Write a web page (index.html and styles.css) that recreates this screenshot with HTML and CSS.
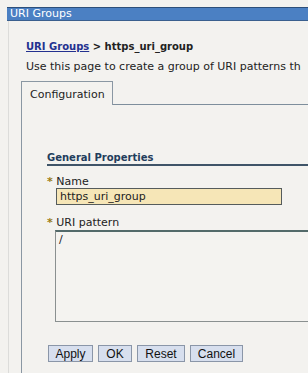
FILE: index.html
```html
<!DOCTYPE html>
<html>
<head>
<meta charset="utf-8">
<link rel="stylesheet" href="styles.css">
</head>
<body>
<div class="page">
  <div class="titlebar">URI Groups</div>
  <div class="content">
    <div class="crumb"><a class="crumb-link" href="#">URI Groups</a> &gt; https_uri_group</div>
    <div class="desc">Use this page to create a group of URI patterns th</div>
    <div class="tabs">
      <div class="tab">Configuration</div>
      <div class="tab-fill"></div>
    </div>
    <div class="panel">
      <div class="section-title">General Properties</div>
      <div class="field">
        <div class="label"><span class="req">*</span> Name</div>
        <div class="input">https_uri_group</div>
      </div>
      <div class="field">
        <div class="label"><span class="req">*</span> URI pattern</div>
        <div class="textarea">/</div>
      </div>
      <div class="buttons">
        <button class="btn btn-apply">Apply</button>
        <button class="btn btn-ok">OK</button>
        <button class="btn btn-reset">Reset</button>
        <button class="btn btn-cancel">Cancel</button>
      </div>
    </div>
  </div>
</div>
</body>
</html>
```
FILE: styles.css
```css
html, body {
  margin: 0;
  padding: 0;
  background: #f3f2ef;
  overflow: hidden;
}
.page {
  width: 308px;
  height: 373px;
  padding-top: 7px;
  box-sizing: border-box;
  font-family: "DejaVu Sans", Verdana, sans-serif;
  font-size: 11px;
  color: #222;
  overflow: hidden;
}
.titlebar {
  margin-left: 7px;
  height: 12px;
  line-height: 12px;
  background: #4b80c3;
  border-top: 1px solid #2d4f7a;
  border-bottom: 1px solid #3a5f8e;
  color: #fff;
  padding-left: 3px;
  font-size: 11px;
  white-space: nowrap;
}
.content {
  margin-left: 8px;
  border-left: 1px solid #dcdcda;
  padding-left: 12px;
  padding-top: 19px;
  white-space: nowrap;
}
.crumb {
  padding-left: 5px;
  font-weight: bold;
  font-size: 10px;
  height: 14px;
  line-height: 14px;
  color: #222;
}
.crumb-link {
  color: #23318f;
  text-decoration: underline;
}
.desc {
  margin-top: 6px;
  padding-left: 5px;
  height: 14px;
  line-height: 14px;
  color: #222;
}
.tabs {
  display: flex;
  margin-top: 7px;
}
.tab {
  height: 24px;
  line-height: 25px;
  border: 1px solid #8a97a3;
  border-bottom: none;
  padding-left: 8px;
  box-sizing: border-box;
  width: 92px;
  color: #222;
}
.tab-fill {
  flex: 1;
  border-bottom: 1px solid #7e8e9c;
}
.panel {
  border-left: 1px solid #8a97a3;
  padding-left: 25px;
  padding-top: 46px;
  height: 300px;
}
.section-title {
  font-weight: bold;
  color: #223d5c;
  font-size: 10px;
  line-height: 13px;
  border-bottom: 2px solid #3f5468;
  margin-right: -40px;
}
.field {
  margin-top: 10px;
}
.field + .field {
  margin-top: 12px;
}
.label {
  height: 12px;
  line-height: 12px;
  color: #222;
}
.req {
  color: #9a7c14;
  font-weight: bold;
}
.input {
  margin-left: 9px;
  width: 226px;
  height: 17px;
  line-height: 16px;
  box-sizing: border-box;
  border: 1px solid #555c5c;
  background: #f6e6b7;
  padding-left: 3px;
  color: #222;
}
.textarea {
  margin-top: 1px;
  margin-left: 8px;
  margin-right: -40px;
  height: 92px;
  box-sizing: border-box;
  border: 1px solid #8a9090;
  border-top: 2px solid #536a6a;
  background: #f4f3f0;
  padding-left: 3px;
  line-height: 16px;
  color: #222;
}
.buttons {
  display: flex;
  gap: 5px;
  margin-top: 23px;
  margin-left: 1px;
}
.btn {
  height: 17px;
  box-sizing: border-box;
  border: 1px solid #8a96a8;
  background: #d7dfee;
  font-family: "Liberation Sans", Arial, sans-serif;
  font-size: 12px;
  color: #111;
  padding: 0;
  line-height: 14px;
}
.btn-apply { width: 45px; }
.btn-ok { width: 34px; }
.btn-reset { width: 48px; }
.btn-cancel { width: 53px; }
```
